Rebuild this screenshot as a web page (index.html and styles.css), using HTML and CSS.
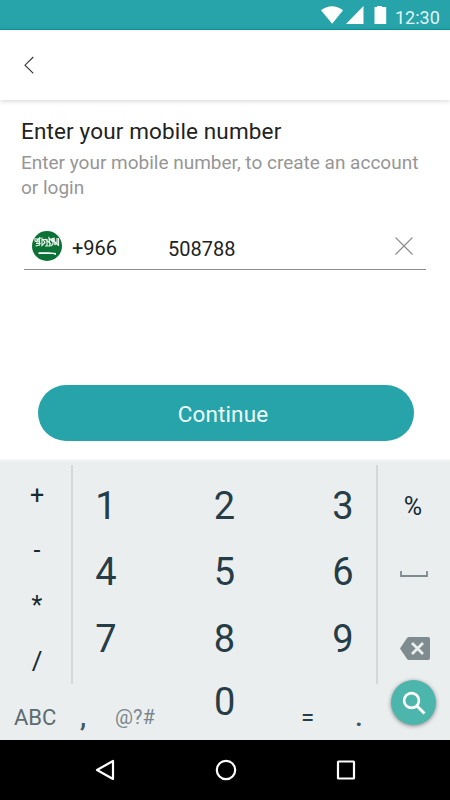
FILE: index.html
```html
<!DOCTYPE html>
<html lang="en">
<head>
<meta charset="utf-8">
<title>Enter your mobile number</title>
<link rel="stylesheet" href="styles.css">
</head>
<body>
<div class="screen">
  <div class="status">
    <svg width="62" height="20" viewBox="0 0 62 20" fill="#fff"><path d="M0 4.2Q11-3.800 22 4.2L11.2 17.8Z"/><path d="M42.500 0V18H25Z"/><path d="M53.500 1H56V0h5v1h4.200V18H53.500Z"/></svg>
    <span class="time">12:30</span>
  </div>
  <header class="appbar">
    <svg width="12" height="19" viewBox="0 0 12 19" fill="none" stroke="#333" stroke-width="1.100"><path d="M10.300 1L2 9.200L10.300 17.400"/></svg>
  </header>
  <main class="content">
    <h1 class="title">Enter your mobile number</h1>
    <p class="subtitle">Enter your mobile number, to create an account<br>or login</p>
    <div class="field">
      <svg class="flag" width="30" height="30" viewBox="0 0 30 30"><circle cx="15" cy="15" r="15" fill="#0b7134"/><g fill="none" stroke="#fff" stroke-width="1.200" opacity=".9"><path d="M3 7v3l2 1V7M3.500 15l4-1V7l-2 2 3 4M10 6.500v8l3-3-2-3h4v6M13 15h5l-1-8 3 3v-3M19 15l2-2V7M22 6.500l1 7 2-1V7M26.500 7v8M6 8l3-1M13 8l6 5M4 12.500h3M21 9l5 5"/></g><path d="M6.500 21.300h10l7.500 .6v2l-3-.8h-14.500Z" fill="#fff"/></svg>
      <span class="code">+966</span>
      <span class="number">508788</span>
      <svg class="clear" width="20" height="20" viewBox="0 0 20 20" fill="none" stroke="#8d8d8d" stroke-width="1.100"><path d="M1.500 1.500L18.500 18.500M18.500 1.500L1.500 18.500"/></svg>
    </div>
    <button class="continue">Continue</button>
  </main>
  <section class="keyboard">
    <div class="keys">
      <div class="ops"><span>+</span><span>-</span><span>*</span><span class="slash">/</span></div>
      <div class="digits">
        <span>1</span><span>2</span><span>3</span>
        <span>4</span><span>5</span><span>6</span>
        <span>7</span><span>8</span><span>9</span>
      </div>
      <div class="side">
        <span class="percent">%</span>
        <svg class="space" width="28" height="7" viewBox="0 0 28 7" fill="none" stroke="#7e8b8f" stroke-width="1.800"><path d="M1 0V5H27V0"/></svg>
        <svg class="delete" width="30" height="23" viewBox="0 0 30 23"><path d="M9 0H28Q30 0 30 2V21Q30 23 28 23H9Q7.800 23 7 22L0 11.500L7 1Q7.800 0 9 0Z" fill="#7e8b8f"/><path d="M12 6L23 17M23 6L12 17" stroke="#ebeeef" stroke-width="2.800"/></svg>
      </div>
    </div>
    <div class="bottom">
      <span class="abc">ABC</span><span class="comma">,</span><span class="symbols">@?#</span><span class="zero">0</span><span class="equals">=</span><span class="dot">.</span>
      <button class="search"><svg width="24" height="24" viewBox="0 0 24 24" fill="none" stroke="#fff"><circle cx="9.500" cy="9.500" r="7.400" stroke-width="2.600"/><path d="M14.500 14.500L22.500 22.500" stroke-width="3"/></svg></button>
    </div>
  </section>
  <nav class="nav">
    <svg width="20" height="22" viewBox="0 0 20 22"><path d="M2 11L18 2V20Z"/></svg>
    <svg width="22" height="22" viewBox="0 0 22 22"><circle cx="11" cy="11" r="9.200"/></svg>
    <svg width="20" height="22" viewBox="0 0 20 22"><rect x="2" y="2.500" width="16" height="17" rx=".5"/></svg>
  </nav>
</div>
</body>
</html>
```
FILE: styles.css
```css
* { box-sizing: border-box; }
body { margin: 0; background: #fff; font-family: Roboto, "Liberation Sans", sans-serif; }
svg { display: block; flex: none; overflow: visible; }
button { border: 0; padding: 0; font: inherit; }
.screen { width: 450px; height: 800px; display: flex; flex-direction: column; overflow: hidden; }

.status { height: 30px; flex: none; background: #27a3aa; border-bottom: 1px solid #0c989d; display: flex; padding: 6px 0 0 321px; }
.time { margin-left: 12px; font-size: 18px; line-height: 23px; letter-spacing: 0; color: #e0f5f5; }

.appbar { height: 70px; flex: none; padding: 26px 0 0 23px; box-shadow: 0 1px 5px rgba(0,0,0,.17); }

.content { height: 359px; flex: none; padding-top: 17px; }
.title { margin: 0 0 0 21px; font-size: 22.500px; line-height: 29px; font-weight: 400; letter-spacing: .14px; color: #222; white-space: nowrap; }
.subtitle { margin: 4px 0 0 21px; font-size: 19px; line-height: 25px; letter-spacing: 0; color: #969696; white-space: nowrap; }
.field { margin: 31px 24px 0; height: 39px; padding-left: 8px; border-bottom: 1px solid #8d8d8d; display: flex; font-size: 20px; line-height: 34px; color: #222; }
.code { margin-left: 10px; width: 96px; }
.number { padding-top: 1px; }
.clear { margin: 5px 12px 0 auto; }
.continue { display: block; width: 376px; height: 56px; margin: 115px 0 0 38px; border-radius: 28px; background: #27a3aa; color: #eefcfa; font-size: 22.500px; line-height: 59px; letter-spacing: .15px; text-indent: -6px; }

.keyboard { height: 281px; flex: none; background: #ebeeef; border-top: 2px solid #f4f5f5; color: #263d47; }
.keys { height: 223px; padding-top: 4px; display: flex; }
.ops { width: 73px; border-right: 2px solid #d3d8d9; display: flex; flex-direction: column; font-size: 25px; color: #152b34; padding: 3px 0 0 3px; }
.ops span { height: 55px; line-height: 55px; text-align: center; }
.ops .slash { font-size: 26px; line-height: 57px; }
.digits { width: 303px; display: grid; grid-template-columns: 42px 195px 42px; grid-auto-rows: 66.400px; padding: 8px 0 0 12px; font-size: 38px; line-height: 66px; }
.digits span { text-align: center; }
.side { flex: 1; border-left: 2px solid #d3d8d9; display: flex; flex-direction: column; align-items: center; }
.percent { font-size: 25px; line-height: 30px; margin: 27px 2px 0 0; color: #152b34; }
.space { margin-top: 49px; }
.delete { margin: 59px 0 0 2px; }
.bottom { height: 56px; display: flex; align-items: flex-start; white-space: nowrap; }
.abc, .comma, .symbols, .zero, .equals, .dot { flex: none; }
.abc { width: 66px; padding-left: 14px; font-size: 22px; line-height: 67px; color: #5c6b71; }
.comma { width: 35px; padding-left: 14px; font-size: 28px; line-height: 66px; color: #45565d; font-weight: 500; }
.symbols { width: 113px; padding-left: 14px; font-size: 20px; line-height: 66px; color: #7b878c; }
.zero { width: 87px; font-size: 38px; line-height: 37px; }
.equals { width: 54px; font-size: 24px; line-height: 69px; }
.dot { width: 36px; font-size: 28px; line-height: 65px; color: #45565d; font-weight: 500; }
.search { flex: none; width: 45px; height: 45px; border-radius: 50%; background: #4db6ac; margin-top: -4px; display: flex; align-items: center; justify-content: center; box-shadow: 0 1px 4px rgba(0,0,0,.45); }

.nav { height: 60px; flex: none; background: #000; display: flex; justify-content: space-between; align-items: center; padding: 0 94px 0 95px; }
.nav svg { fill: none; stroke: #fff; stroke-width: 2.200; stroke-linejoin: round; }
```
